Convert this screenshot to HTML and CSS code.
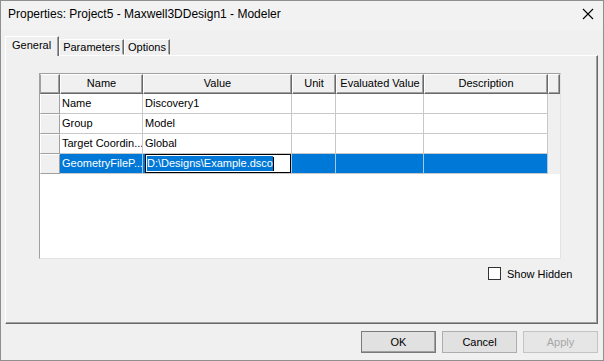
FILE: index.html
```html
<!DOCTYPE html>
<html lang="en-US"><head>
<meta charset="utf-8">
<meta name="viewport" content="width=device-width, initial-scale=1.0">
<link rel="stylesheet" href="styles.css">
</head><body>

<div class="window">
	<div class="titlebar">
		<span class="title">Properties: Project5 - Maxwell3DDesign1 - Modeler</span>
		<svg class="close" width="12" height="12" viewBox="0 0 12 12"><path d="M1 1 L11 11 M11 1 L1 11" stroke="#000" stroke-width="1.1" fill="none"/></svg>
	</div>

	<div class="tabs">
		<div class="tab active">General</div>
		<div class="tab">Parameters</div>
		<div class="tab">Options</div>
	</div>

	<div class="panel">
		<div class="grid">
			<div class="hd corner"></div>
			<div class="hd">Name</div>
			<div class="hd">Value</div>
			<div class="hd">Unit</div>
			<div class="hd">Evaluated Value</div>
			<div class="hd">Description</div>
			<div class="hd filler"></div>

			<div class="rh"></div>
			<div class="cell">Name</div>
			<div class="cell">Discovery1</div>
			<div class="cell"></div>
			<div class="cell"></div>
			<div class="cell"></div>
			<div class="gap"></div>

			<div class="rh"></div>
			<div class="cell">Group</div>
			<div class="cell">Model</div>
			<div class="cell"></div>
			<div class="cell"></div>
			<div class="cell"></div>
			<div class="gap"></div>

			<div class="rh"></div>
			<div class="cell">Target Coordin...</div>
			<div class="cell">Global</div>
			<div class="cell"></div>
			<div class="cell"></div>
			<div class="cell"></div>
			<div class="gap"></div>

			<div class="rh"></div>
			<div class="cell sel">GeometryFileP...</div>
			<div class="cell sel"><div class="edit"><span class="seltext">D:\Designs\Example.dsco</span><span class="caret"></span></div></div>
			<div class="cell sel"></div>
			<div class="cell sel"></div>
			<div class="cell sel"></div>
			<div class="gap"></div>
		</div>

		<div class="check-row">
			<span class="box"></span>
			<span>Show Hidden</span>
		</div>
	</div>

	<div class="footer">
		<button class="btn default">OK</button>
		<button class="btn">Cancel</button>
		<button class="btn disabled">Apply</button>
	</div>
</div>

</body></html>
```

FILE: styles.css
```css
html, body {
	margin : 0 ;
	padding : 0 ;
	background : #f0f0f0 ;
	}
body {
	font-family : "Liberation Sans", Arial, sans-serif ;
	font-size : 11px ;
	color : #000 ;
	}
.window {
	box-sizing : border-box ;
	width : 604px ;
	height : 361px ;
	border : 1px solid #8f8f8f ;
	background : #f0f0f0 ;
	display : flex ;
	flex-direction : column ;
	}

/* title bar */
.titlebar {
	height : 29px ;
	display : flex ;
	align-items : center ;
	padding : 0 9px 4px 7px ;
	box-sizing : border-box ;
	background : #f2f2f2 ;
	}
.titlebar .title {
	font-size : 12px ;
	flex : 1 ;
	}
.titlebar .close {
	display : block ;
	}

/* tabs */
.tabs {
	display : flex ;
	align-items : flex-end ;
	height : 25px ;
	padding-left : 4px ;
	box-sizing : border-box ;
	position : relative ;
	z-index : 1 ;
	}
.tab {
	box-sizing : border-box ;
	height : 16px ;
	line-height : 14px ;
	padding : 0 3px ;
	border : 1px solid ;
	border-color : #fff #696969 transparent #fff ;
	box-shadow : inset -1px 0 0 #a0a0a0 ;
	}
.tab.active {
	height : 20px ;
	line-height : 16px ;
	padding : 0 7px 0 6px ;
	margin-bottom : -1px ;
	background : #f0f0f0 ;
	border-bottom : none ;
	}

/* panel */
.panel {
	box-sizing : border-box ;
	height : 269px ;
	margin : 0 5px 0 4px ;
	border : 1px solid ;
	border-color : #fff #696969 #696969 #fff ;
	box-shadow : inset -1px -1px 0 #a0a0a0 ;
	padding : 17px 0 0 33px ;
	}

/* property grid */
.grid {
	display : grid ;
	grid-template-columns : 20px 83px 149px 44px 88px 124px 12px ;
	grid-template-rows : repeat( 5, 20px ) ;
	width : 520px ;
	height : 184px ;
	border : 1px solid ;
	border-color : #a0a0a0 #e3e3e3 #e3e3e3 #a0a0a0 ;
	background : #fff ;
	align-content : start ;
	}
.hd, .rh {
	box-sizing : border-box ;
	background : #f0f0f0 ;
	border : 1px solid ;
	border-color : #fff #696969 #696969 #fff ;
	box-shadow : inset -1px -1px 0 #a0a0a0 ;
	text-align : center ;
	line-height : 17px ;
	white-space : nowrap ;
	overflow : hidden ;
	}
.hd.corner {
	border-left-color : #a0a0a0 ;
	}
.rh {
	border-color : #fff #a0a0a0 #a0a0a0 #fff ;
	box-shadow : none ;
	}
.gap {
	background : #f0f0f0 ;
	}
.cell {
	box-sizing : border-box ;
	border-right : 1px solid #c8c8c8 ;
	border-bottom : 1px solid #c8c8c8 ;
	padding-left : 2px ;
	line-height : 19px ;
	white-space : nowrap ;
	overflow : hidden ;
	}
.cell.sel {
	background : #0078d7 ;
	color : #fff ;
	border-right-color : #a8c8e8 ;
	}
.edit {
	box-sizing : border-box ;
	height : 19px ;
	margin-left : 0 ;
	border : 1px solid #000 ;
	background : #fff ;
	display : flex ;
	align-items : center ;
	padding-left : 1px ;
	}
.seltext {
	background : #0078d7 ;
	color : #fff ;
	line-height : 15px ;
	}
.caret {
	display : inline-block ;
	width : 1px ;
	height : 14px ;
	background : #000 ;
	}

/* show hidden */
.check-row {
	display : flex ;
	align-items : center ;
	gap : 6px ;
	margin-top : 8px ;
	padding-left : 449px ;
	font-size : 11px ;
	}
.check-row .box {
	box-sizing : border-box ;
	width : 13px ;
	height : 13px ;
	border : 1px solid #333 ;
	background : #fff ;
	}

/* buttons */
.footer {
	display : flex ;
	justify-content : flex-end ;
	gap : 6px ;
	padding : 7px 5px 0 0 ;
	}
.btn {
	box-sizing : border-box ;
	width : 75px ;
	height : 22px ;
	font-family : "Liberation Sans", Arial, sans-serif ;
	font-size : 11px ;
	background : #e1e1e1 ;
	border : 1px solid #adadad ;
	padding : 0 ;
	color : #000 ;
	}
.btn.default {
	border : 1px solid #7a7a7a ;
	box-shadow : inset -1px -1px 0 #a0a0a0 ;
	}
.btn.disabled {
	background : #e6e6e6 ;
	border-color : #c4c4c4 ;
	color : #a6a6a6 ;
	}
```
